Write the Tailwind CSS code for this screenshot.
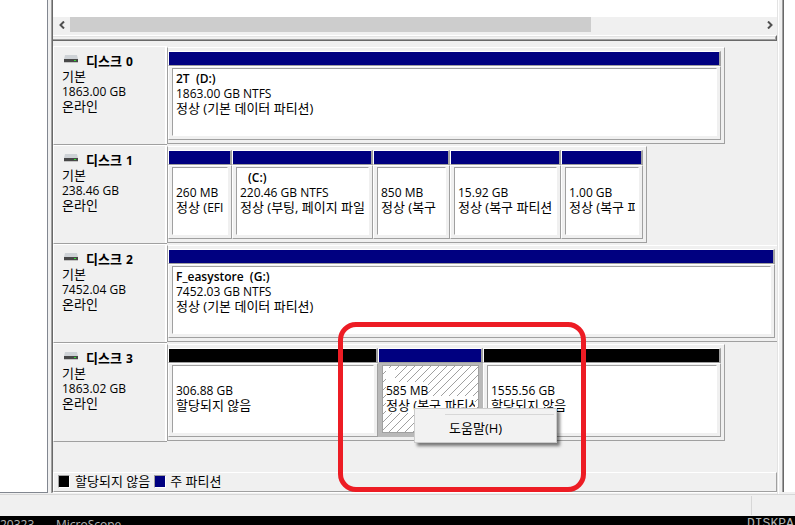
<!DOCTYPE html>
<html lang="ko">
<head>
  <meta charset="UTF-8" />
  <meta name="viewport" content="width=device-width, initial-scale=1.0" />
  <title>디스크 관리</title>
  <script src="https://cdn.jsdelivr.net/npm/@tailwindcss/browser@4"></script>
</head>
<body class="h-screen overflow-hidden flex flex-col bg-[#f0f0f0] text-black text-[12px] leading-[15px] font-['Open_Sans','Noto_Sans_CJK_KR',sans-serif] cursor-default">

  <!-- 디스크 아이콘 -->
  <svg class="hidden">
    <symbol id="disk" viewBox="0 0 14 8">
      <path d="M1 0h12l1 4H0z" fill="#ced2d6" />
      <rect x="0" y="4" width="14" height="3" fill="#484848" />
      <rect x="0" y="7" width="14" height="1" fill="#c4c4c4" />
      <rect x="10" y="5" width="2" height="1" fill="#2fe02f" />
    </symbol>
  </svg>

  <main class="relative flex-1 min-h-0 flex">
    <aside class="w-12 mb-px bg-white border-r border-b border-[#828790]"></aside>

    <section class="flex-1 min-w-0 ml-[3px] mb-px flex flex-col border-l border-[#a0a0a0]">
      <div class="flex-1 min-h-0 flex flex-col border-l border-b border-l-[#696969] border-b-white">

        <div class="h-[17px] bg-white"></div>
        <div class="h-[18px] flex items-start">
          <button type="button" aria-label="왼쪽" class="w-[17px] h-[15px] flex items-center justify-center">
            <svg class="w-[6px] h-[8px]" viewBox="0 0 6 8" fill="none" stroke="#505050" stroke-width="2"><path d="M5 .5 1.5 4 5 7.5" /></svg>
          </button>
          <div class="flex-1 h-[15px]"><div class="w-[75.3%] h-full bg-[#cdcdcd]"></div></div>
          <button type="button" aria-label="오른쪽" class="w-[15px] h-[15px] flex items-center justify-center">
            <svg class="w-[6px] h-[8px]" viewBox="0 0 6 8" fill="none" stroke="#505050" stroke-width="2"><path d="M1 .5 4.5 4 1 7.5" /></svg>
          </button>
        </div>
        <div class="h-[6px] border-t border-b border-r border-t-white border-b-[#696969] border-r-[#696969]">
          <div class="h-full border-t border-b border-r border-t-[#e3e3e3] border-b-[#a0a0a0] border-r-[#a0a0a0]"></div>
        </div>

        <div class="mt-[5px]">
          <!-- 디스크 0 -->
          <div class="h-[99px] flex">
            <div class="w-[114px] shrink-0 pl-[8px] pt-[7px] border-t border-l border-white border-b border-b-[#a0a0a0] shadow-[inset_-2px_0_0_white]">
              <h2 class="flex font-bold"><svg class="w-[14px] h-[8px] mt-px ml-[2px] mr-[8px]"><use href="#disk" /></svg><span class="mr-px text-[13px]">디스크</span>&nbsp;0</h2>
              <p class="text-[13px]">기본</p>
              <p>1863.00 GB</p>
              <p class="text-[13px]">온라인</p>
            </div>
            <div class="flex-1 min-w-0 my-px mr-[52px] flex py-[3px] pr-[3px] border border-[#a0a0a0] border-t-white">
              <div class="flex-1 min-w-0 flex flex-col">
                <div class="h-[15px] bg-[#000080] border-t border-l border-b border-r-2 border-[#a0a0a0] border-t-white border-l-white"></div>
                <div class="flex-1 p-[3px] pt-px border border-[#a0a0a0] border-t-white border-l-white flex">
                  <div class="flex-1 min-w-0 bg-white border border-white border-t-[#a0a0a0] border-l-[#a0a0a0] px-[3px] pt-[2px]">
                    <div class="overflow-hidden whitespace-nowrap">
                      <p class="font-semibold">2T &nbsp;(D:)</p>
                      <p>1863.00 GB NTFS</p>
                      <p class="text-[13px]">정상 (기본 데이터 파티션)</p>
                    </div>
                  </div>
                </div>
              </div>
            </div>
          </div>

          <!-- 디스크 1 -->
          <div class="h-[99px] flex">
            <div class="w-[114px] shrink-0 pl-[8px] pt-[7px] border-t border-l border-white border-b border-b-[#a0a0a0] shadow-[inset_-2px_0_0_white]">
              <h2 class="flex font-bold"><svg class="w-[14px] h-[8px] mt-px ml-[2px] mr-[8px]"><use href="#disk" /></svg><span class="mr-px text-[13px]">디스크</span>&nbsp;1</h2>
              <p class="text-[13px]">기본</p>
              <p>238.46 GB</p>
              <p class="text-[13px]">온라인</p>
            </div>
            <div class="flex-1 min-w-0 my-px mr-[130px] flex py-[3px] pr-[3px] border border-[#a0a0a0] border-t-white">
              <div class="flex-[64] min-w-0 flex flex-col">
                <div class="h-[15px] bg-[#000080] border-t border-l border-b border-r-2 border-[#a0a0a0] border-t-white border-l-white"></div>
                <div class="flex-1 p-[3px] pt-px border border-[#a0a0a0] border-t-white border-l-white flex">
                  <div class="flex-1 min-w-0 bg-white border border-white border-t-[#a0a0a0] border-l-[#a0a0a0] px-[3px] pt-[2px]">
                    <div class="overflow-hidden whitespace-nowrap">
                      <p>&nbsp;</p>
                      <p>260 MB</p>
                      <p class="text-[13px]">정상 (<span class="text-[12px]">EFI</span></p>
                    </div>
                  </div>
                </div>
              </div>
              <div class="flex-[141] min-w-0 flex flex-col">
                <div class="h-[15px] bg-[#000080] border-t border-l border-b border-r-2 border-[#a0a0a0] border-t-white border-l-white"></div>
                <div class="flex-1 p-[3px] pt-px border border-[#a0a0a0] border-t-white border-l-white flex">
                  <div class="flex-1 min-w-0 bg-white border border-white border-t-[#a0a0a0] border-l-[#a0a0a0] px-[3px] pt-[2px]">
                    <div class="overflow-hidden whitespace-nowrap">
                      <p class="font-semibold pl-2">(C:)</p>
                      <p>220.46 GB NTFS</p>
                      <p class="text-[13px]">정상 (부팅, 페이지 파일</p>
                    </div>
                  </div>
                </div>
              </div>
              <div class="flex-[77] min-w-0 flex flex-col">
                <div class="h-[15px] bg-[#000080] border-t border-l border-b border-r-2 border-[#a0a0a0] border-t-white border-l-white"></div>
                <div class="flex-1 p-[3px] pt-px border border-[#a0a0a0] border-t-white border-l-white flex">
                  <div class="flex-1 min-w-0 bg-white border border-white border-t-[#a0a0a0] border-l-[#a0a0a0] px-[3px] pt-[2px]">
                    <div class="overflow-hidden whitespace-nowrap">
                      <p>&nbsp;</p>
                      <p>850 MB</p>
                      <p class="text-[13px]">정상 (복구</p>
                    </div>
                  </div>
                </div>
              </div>
              <div class="flex-[111] min-w-0 flex flex-col">
                <div class="h-[15px] bg-[#000080] border-t border-l border-b border-r-2 border-[#a0a0a0] border-t-white border-l-white"></div>
                <div class="flex-1 p-[3px] pt-px border border-[#a0a0a0] border-t-white border-l-white flex">
                  <div class="flex-1 min-w-0 bg-white border border-white border-t-[#a0a0a0] border-l-[#a0a0a0] px-[3px] pt-[2px]">
                    <div class="overflow-hidden whitespace-nowrap">
                      <p>&nbsp;</p>
                      <p>15.92 GB</p>
                      <p class="text-[13px]">정상 (복구 파티션</p>
                    </div>
                  </div>
                </div>
              </div>
              <div class="flex-[82] min-w-0 flex flex-col">
                <div class="h-[15px] bg-[#000080] border-t border-l border-b border-r-2 border-[#a0a0a0] border-t-white border-l-white"></div>
                <div class="flex-1 p-[3px] pt-px border border-[#a0a0a0] border-t-white border-l-white flex">
                  <div class="flex-1 min-w-0 bg-white border border-white border-t-[#a0a0a0] border-l-[#a0a0a0] px-[3px] pt-[2px]">
                    <div class="overflow-hidden whitespace-nowrap">
                      <p>&nbsp;</p>
                      <p>1.00 GB</p>
                      <p class="text-[13px]">정상 (복구 파</p>
                    </div>
                  </div>
                </div>
              </div>
            </div>
          </div>

          <!-- 디스크 2 -->
          <div class="h-[99px] flex">
            <div class="w-[114px] shrink-0 pl-[8px] pt-[7px] border-t border-l border-white border-b border-b-[#a0a0a0] shadow-[inset_-2px_0_0_white]">
              <h2 class="flex font-bold"><svg class="w-[14px] h-[8px] mt-px ml-[2px] mr-[8px]"><use href="#disk" /></svg><span class="mr-px text-[13px]">디스크</span>&nbsp;2</h2>
              <p class="text-[13px]">기본</p>
              <p>7452.04 GB</p>
              <p class="text-[13px]">온라인</p>
            </div>
            <div class="flex-1 min-w-0 my-px flex py-[3px] pr-[2px] border border-r-0 border-[#a0a0a0] border-t-white">
              <div class="flex-1 min-w-0 flex flex-col">
                <div class="h-[15px] bg-[#000080] border-t border-l border-b border-r-2 border-[#a0a0a0] border-t-white border-l-white"></div>
                <div class="flex-1 p-[3px] pt-px border border-[#a0a0a0] border-t-white border-l-white flex">
                  <div class="flex-1 min-w-0 bg-white border border-white border-t-[#a0a0a0] border-l-[#a0a0a0] px-[3px] pt-[2px]">
                    <div class="overflow-hidden whitespace-nowrap">
                      <p class="font-semibold">F_easystore &nbsp;(G:)</p>
                      <p>7452.03 GB NTFS</p>
                      <p class="text-[13px]">정상 (기본 데이터 파티션)</p>
                    </div>
                  </div>
                </div>
              </div>
            </div>
          </div>

          <!-- 디스크 3 -->
          <div class="h-[99px] flex">
            <div class="w-[114px] shrink-0 pl-[8px] pt-[7px] border-t border-l border-white border-b border-b-[#a0a0a0] shadow-[inset_-2px_0_0_white]">
              <h2 class="flex font-bold"><svg class="w-[14px] h-[8px] mt-px ml-[2px] mr-[8px]"><use href="#disk" /></svg><span class="mr-px text-[13px]">디스크</span>&nbsp;3</h2>
              <p class="text-[13px]">기본</p>
              <p>1863.02 GB</p>
              <p class="text-[13px]">온라인</p>
            </div>
            <div class="flex-1 min-w-0 my-px mr-[52px] flex py-[3px] pr-[3px] border border-[#a0a0a0] border-t-white">
              <div class="flex-[210] min-w-0 flex flex-col">
                <div class="h-[15px] bg-black border-t border-l border-b border-r-2 border-[#a0a0a0] border-t-white border-l-white"></div>
                <div class="flex-1 p-[3px] pt-px border border-[#a0a0a0] border-t-white border-l-white flex">
                  <div class="flex-1 min-w-0 bg-white border border-white border-t-[#a0a0a0] border-l-[#a0a0a0] px-[3px] pt-[2px]">
                    <div class="overflow-hidden whitespace-nowrap">
                      <p>&nbsp;</p>
                      <p>306.88 GB</p>
                      <p class="text-[13px]">할당되지 않음</p>
                    </div>
                  </div>
                </div>
              </div>
              <div class="relative flex-[105] min-w-0 flex flex-col">
                <div class="h-[15px] bg-[#000080] border-t border-l border-b border-r-2 border-[#a0a0a0] border-t-white border-l-white"></div>
                <div class="flex-1 p-[3px] pt-px border border-[#b9b9b9] bg-[#b9b9b9] flex">
                  <div class="flex-1 min-w-0 border border-[#a0a0a0] px-[3px] pt-[2px] bg-white bg-[linear-gradient(135deg,transparent_45%,#a0a0a0_45%_54%,transparent_54%)] bg-size-[8px_8px]">
                    <div class="overflow-hidden whitespace-nowrap">
                      <p><span class="bg-white">&nbsp;&nbsp;&nbsp;</span></p>
                      <p><span class="bg-white">585 MB</span></p>
                      <p class="text-[13px]"><span class="bg-white">정상 (복구 파티션</span></p>
                    </div>
                  </div>
                </div>
                <!-- 컨텍스트 메뉴 -->
                <div role="menu" class="absolute z-10 left-[36px] top-[60px] w-[143px] h-[35px] px-[2px] pt-[5px] bg-[#f2f2f2] border border-[#ccc] shadow-[3px_3px_3px_rgba(0,0,0,0.5)]">
                  <div class="ml-[28px] border-t border-[#d7d7d7]"></div>
                  <button type="button" role="menuitem" class="w-full pl-8 pt-[6px] text-left text-[13px]">도움말(H)</button>
                </div>
              </div>
              <div class="flex-[238] min-w-0 flex flex-col">
                <div class="h-[15px] bg-black border-t border-l border-b border-r-2 border-[#a0a0a0] border-t-white border-l-white"></div>
                <div class="flex-1 p-[3px] pt-px border border-[#a0a0a0] border-t-white border-l-white flex">
                  <div class="flex-1 min-w-0 bg-white border border-white border-t-[#a0a0a0] border-l-[#a0a0a0] px-[3px] pt-[2px]">
                    <div class="overflow-hidden whitespace-nowrap">
                      <p>&nbsp;</p>
                      <p>1555.56 GB</p>
                      <p class="text-[13px]">할당되지 않음</p>
                    </div>
                  </div>
                </div>
              </div>
            </div>
          </div>
        </div>

        <!-- 범례 -->
        <div class="mt-auto h-5 flex items-center pl-[4px] pb-px text-[13px] border border-white border-r-[#a0a0a0] border-b-[#a0a0a0]">
          <span class="w-[12px] h-[13px] mr-[5px] bg-black border border-white border-t-[#a0a0a0] border-l-[#a0a0a0]"></span>할당되지 않음
          <span class="w-[12px] h-[13px] mx-[4px] bg-[#000080] border border-white border-t-[#a0a0a0] border-l-[#a0a0a0]"></span>주 파티션
        </div>
      </div>
    </section>

    <div class="w-[5px] border-l border-[#e3e3e3]"><div class="h-full border-l border-white"></div></div>
    <aside class="w-[13px] mb-[2px] bg-white border-l border-[#a0a0a0]"><div class="h-full border-l border-[#696969]"></div></aside>

    <!-- 강조 표시 -->
    <div class="absolute z-20 left-[338px] top-[322px] w-[248px] h-[170px] border-[5px] border-[#ed1c24] rounded-[18px] pointer-events-none"></div>
  </main>

  <footer class="h-[22px] shrink-0 flex justify-end border-t border-[#d7d7d7]">
    <div class="w-11 my-px border-l border-[#d7d7d7]"></div>
  </footer>

  <div class="h-[9px] shrink-0 overflow-hidden flex bg-black text-[#b4b4b4]">
    <span class="w-14 pt-px">20323</span>
    <span class="pt-px">MicroScope</span>
    <span class="ml-auto w-12 text-[13px] font-['Liberation_Mono',monospace]">DISKPA</span>
  </div>
</body>
</html>
